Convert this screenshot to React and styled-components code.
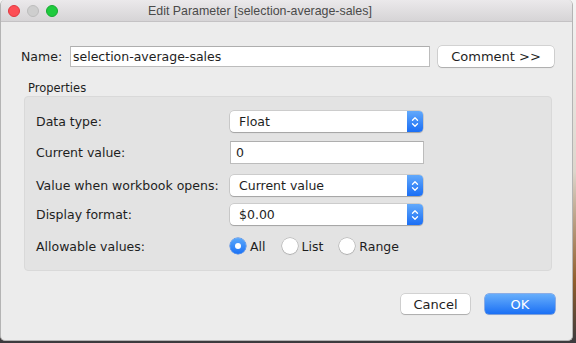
import React from "react";
import styled, { createGlobalStyle } from "styled-components";

const GlobalStyle = createGlobalStyle`
  html, body {
    margin: 0;
    padding: 0;
  }
  body {
    width: 576px;
    height: 343px;
    overflow: hidden;
    background: linear-gradient(180deg, #f4f4f4 0%, #ddd6cc 50%, #8f5d2c 82%, #3b3a3e 100%);
    font-family: "DejaVu Sans", "Liberation Sans", sans-serif;
    font-size: 12.5px;
    color: #1e1e1e;
  }
`;

const Window = styled.div`
  width: 573px;
  height: 341px;
  box-sizing: border-box;
  display: flex;
  flex-direction: column;
  background: #ececec;
  border: 1px solid #b4b4b4;
  border-top: none;
  border-radius: 5px;
  overflow: hidden;
`;

const TitleBar = styled.div`
  height: 21px;
  flex-shrink: 0;
  display: flex;
  align-items: center;
  padding-left: 7px;
  background: linear-gradient(180deg, #ebe9eb 0%, #d6d4d6 100%);
  border-bottom: 1px solid #c4c2c4;
`;

const Lights = styled.div`
  display: flex;
  gap: 7px;
`;

const Light = styled.span`
  width: 12px;
  height: 12px;
  box-sizing: border-box;
  border-radius: 50%;
  background: ${(p) => p.$color};
  border: 0.5px solid ${(p) => p.$edge};
`;

const Title = styled.div`
  margin-left: 90px;
  padding-top: 2px;
  font-family: "Liberation Sans", Arial, sans-serif;
  font-size: 12.4px;
  color: #4a4a4a;
  line-height: 19px;
  white-space: nowrap;
`;

const Body = styled.div`
  flex: 1;
  display: flex;
  flex-direction: column;
  padding: 24px 18px 0 20px;
`;

const NameRow = styled.div`
  display: flex;
  align-items: center;
  height: 21px;
`;

const NameLabel = styled.label`
  width: 49px;
  flex-shrink: 0;
`;

const TextField = styled.div`
  width: ${(p) => p.$width}px;
  height: ${(p) => p.$height}px;
  box-sizing: border-box;
  background: #fff;
  border: 1px solid #bcbcbc;
  border-top-color: #aeaeae;
  display: flex;
  align-items: center;
  padding-left: ${(p) => p.$pad}px;
  white-space: nowrap;
`;

const PushButton = styled.div`
  width: ${(p) => p.$width}px;
  height: 20px;
  box-sizing: border-box;
  display: flex;
  align-items: center;
  justify-content: center;
  border-radius: 4px;
  background: ${(p) => (p.$primary ? "linear-gradient(180deg, #67aefb 0%, #1b70f5 100%)" : "#fff")};
  color: ${(p) => (p.$primary ? "#fff" : "#1e1e1e")};
  box-shadow: ${(p) =>
    p.$primary
      ? "0 0 0 0.5px #2a6fe0, 0 1px 1px rgba(0,0,0,0.12)"
      : "0 0 0 0.5px rgba(0,0,0,0.22), 0 1px 1px rgba(0,0,0,0.18)"};
  font-size: 13px;
`;

const CommentButton = styled(PushButton)`
  margin-left: 8px;
  height: 21px;
`;

const Caption = styled.div`
  font-size: 11.5px;
  line-height: 14px;
  margin: 14px 0 1px 7px;
`;

const Group = styled.div`
  margin-left: 3px;
  width: 528px;
  height: 175px;
  box-sizing: border-box;
  background: #e3e3e3;
  border: 1px solid #d9d9d9;
  border-radius: 4px;
  padding: 14px 0 0 11px;
  display: flex;
  flex-direction: column;
`;

const Row = styled.div`
  display: flex;
  align-items: center;
  height: ${(p) => p.$height}px;
  margin-top: ${(p) => p.$top || 0}px;
`;

const RowLabel = styled.div`
  width: 194px;
  flex-shrink: 0;
  white-space: nowrap;
`;

const SelectBox = styled.div`
  width: 193px;
  height: 21px;
  box-sizing: border-box;
  display: flex;
  align-items: center;
  background: #fff;
  border-radius: 4px;
  box-shadow: 0 0 0 0.5px rgba(0, 0, 0, 0.2), 0 1px 1px rgba(0, 0, 0, 0.2);
  overflow: hidden;
`;

const SelectText = styled.span`
  flex: 1;
  padding-left: 9px;
  white-space: nowrap;
`;

const Stepper = styled.span`
  width: 16px;
  height: 100%;
  display: flex;
  align-items: center;
  justify-content: center;
  background: linear-gradient(180deg, #62a9fb 0%, #1a6ef5 100%);
`;

const Radios = styled.div`
  display: flex;
  align-items: center;
  gap: 16px;
`;

const RadioOption = styled.div`
  display: flex;
  align-items: center;
  gap: 4px;
`;

const RadioDot = styled.span`
  width: 16px;
  height: 16px;
  box-sizing: border-box;
  border-radius: 50%;
  display: flex;
  align-items: center;
  justify-content: center;
  background: ${(p) => (p.$on ? "linear-gradient(180deg, #5aa8fb 0%, #1c72f5 100%)" : "#fff")};
  box-shadow: ${(p) =>
    p.$on ? "0 0 0 0.5px #2a72e6" : "0 0 0 0.5px rgba(0,0,0,0.28), 0 1px 1px rgba(0,0,0,0.12)"};
  &::after {
    content: "";
    display: ${(p) => (p.$on ? "block" : "none")};
    width: 6px;
    height: 6px;
    border-radius: 50%;
    background: #fff;
  }
`;

const Footer = styled.div`
  display: flex;
  justify-content: flex-end;
  gap: 15px;
  margin-top: 23px;
  margin-right: -1px;
`;

const Chevrons = () => (
  <svg width="8" height="14" viewBox="0 0 8 14" fill="none" stroke="#fff" strokeWidth="1.3" strokeLinecap="round" strokeLinejoin="round">
    <path d="M1.5 5.2 L4 2.7 L6.5 5.2" />
    <path d="M1.5 8.8 L4 11.3 L6.5 8.8" />
  </svg>
);

const Select = ({ value }) => (
  <SelectBox>
    <SelectText>{value}</SelectText>
    <Stepper>
      <Chevrons />
    </Stepper>
  </SelectBox>
);

const Radio = ({ label, on }) => (
  <RadioOption>
    <RadioDot $on={on} />
    <span>{label}</span>
  </RadioOption>
);

export default function App() {
  return (
    <>
      <GlobalStyle />
      <Window>
        <TitleBar>
          <Lights>
            <Light $color="#fd4e55" $edge="#e0383f" />
            <Light $color="#cecece" $edge="#bcbcbc" />
            <Light $color="#1fcb3e" $edge="#18a932" />
          </Lights>
          <Title>Edit Parameter [selection-average-sales]</Title>
        </TitleBar>
        <Body>
          <NameRow>
            <NameLabel>Name:</NameLabel>
            <TextField $width={360} $height={21} $pad={2}>selection-average-sales</TextField>
            <CommentButton $width={116}>Comment &gt;&gt;</CommentButton>
          </NameRow>
          <Caption>Properties</Caption>
          <Group>
            <Row $height={21}>
              <RowLabel>Data type:</RowLabel>
              <Select value="Float" />
            </Row>
            <Row $height={23} $top={9}>
              <RowLabel>Current value:</RowLabel>
              <TextField $width={194} $height={23} $pad={5}>0</TextField>
            </Row>
            <Row $height={21} $top={11}>
              <RowLabel>Value when workbook opens:</RowLabel>
              <Select value="Current value" />
            </Row>
            <Row $height={21} $top={8}>
              <RowLabel>Display format:</RowLabel>
              <Select value="$0.00" />
            </Row>
            <Row $height={16} $top={13}>
              <RowLabel>Allowable values:</RowLabel>
              <Radios>
                <Radio label="All" on />
                <Radio label="List" />
                <Radio label="Range" />
              </Radios>
            </Row>
          </Group>
          <Footer>
            <PushButton $width={69}>Cancel</PushButton>
            <PushButton $width={70} $primary>OK</PushButton>
          </Footer>
        </Body>
      </Window>
    </>
  );
}
